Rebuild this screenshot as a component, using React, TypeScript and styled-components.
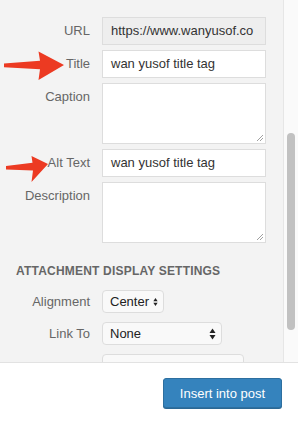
import React from "react";
import styled, { createGlobalStyle } from "styled-components";

const GlobalStyle = createGlobalStyle`
  html, body {
    margin: 0;
    padding: 0;
    background: #ffffff;
  }
  body {
    font-family: "Liberation Sans", Arial, sans-serif;
    font-size: 13px;
    color: #444;
  }
  * {
    box-sizing: border-box;
  }
`;

const Frame = styled.div`
  width: 298px;
  height: 423px;
  display: flex;
  flex-direction: column;
  overflow: hidden;
  position: relative;
`;

const Panel = styled.div`
  height: 362px;
  display: flex;
  flex-direction: row;
  background: #f3f3f3;
  overflow: hidden;
`;

const Content = styled.div`
  flex: 1;
  padding: 17px 0 0 0;
  display: flex;
  flex-direction: column;
`;

const Track = styled.div`
  width: 15px;
  background: #fafafa;
  border-left: 1px solid #e6e6e6;
  padding: 133px 3px 0 3px;
`;

const Thumb = styled.div`
  width: 8px;
  height: 197px;
  border-radius: 4px;
  background: #c1c1c1;
`;

const FieldGrid = styled.div`
  display: grid;
  grid-template-columns: 90px 164px;
  column-gap: 12px;
  row-gap: 5px;
`;

const Label = styled.label`
  text-align: right;
  color: #666;
  font-size: 13px;
  line-height: 16px;
  padding-top: 6px;
`;

const TextInput = styled.div<{ $readonly?: boolean }>`
  height: 28px;
  border: 1px solid #ddd;
  background: ${(p) => (p.$readonly ? "#eeeeee" : "#ffffff")};
  color: #333;
  font-size: 13px;
  line-height: 26px;
  padding: 0 8px;
  white-space: nowrap;
  overflow: hidden;
`;

const TextArea = styled.div`
  height: 61px;
  border: 1px solid #ddd;
  background: #ffffff;
  position: relative;
`;

const Grip = styled.svg`
  position: absolute;
  right: 1px;
  bottom: 1px;
`;

const SectionTitle = styled.h2`
  margin: 21px 0 0 16px;
  font-size: 12px;
  line-height: 14px;
  font-weight: 700;
  color: #666;
  letter-spacing: 0.2px;
  text-transform: uppercase;
`;

const SettingsGrid = styled.div`
  display: grid;
  grid-template-columns: 90px auto;
  column-gap: 12px;
  row-gap: 9px;
  margin-top: 12px;
  justify-items: start;
`;

const SettingLabel = styled.label`
  justify-self: end;
  color: #666;
  font-size: 13px;
  line-height: 23px;
  min-height: 23px;
`;

const Select = styled.div<{ $width: number }>`
  width: ${(p) => p.$width}px;
  height: 23px;
  border: 1px solid #ddd;
  border-radius: 4px;
  background: #f9f9f9;
  color: #222;
  font-size: 13px;
  display: flex;
  align-items: center;
  justify-content: space-between;
  gap: 4px;
  padding: 0 5px 0 7px;
  white-space: nowrap;
`;

const Footer = styled.div`
  flex: 1;
  background: #ffffff;
  border-top: 1px solid #e2e2e2;
  display: flex;
  justify-content: flex-end;
  align-items: flex-start;
  padding: 15px 16px 0 0;
`;

const PrimaryButton = styled.button`
  width: 119px;
  height: 30px;
  border: 1px solid #2d6f9f;
  border-radius: 3px;
  background: #3583bd;
  box-shadow: 0 1px 0 #2a6895;
  color: #ffffff;
  font-family: "Liberation Sans", Arial, sans-serif;
  font-size: 13px;
  padding: 0;
  cursor: pointer;
`;

const ArrowLayer = styled.svg`
  position: absolute;
  left: 0;
  top: 0;
  pointer-events: none;
`;

const SelectArrows = () => (
  <svg width="7" height="12" viewBox="0 0 7 12">
    <path d="M3.5 0.5 L6.5 5 L0.5 5 Z" fill="#222" />
    <path d="M3.5 11.5 L6.5 7 L0.5 7 Z" fill="#222" />
  </svg>
);

const ResizeGrip = () => (
  <Grip width="8" height="8" viewBox="0 0 8 8">
    <path d="M7 1 L1 7 M7 4 L4 7" stroke="#888" strokeWidth="0.8" />
  </Grip>
);

export default function App() {
  return (
    <>
      <GlobalStyle />
      <Frame>
        <Panel>
          <Content>
            <FieldGrid>
              <Label>URL</Label>
              <TextInput $readonly>https://www.wanyusof.co</TextInput>
              <Label>Title</Label>
              <TextInput>wan yusof title tag</TextInput>
              <Label>Caption</Label>
              <TextArea>
                <ResizeGrip />
              </TextArea>
              <Label>Alt Text</Label>
              <TextInput>wan yusof title tag</TextInput>
              <Label>Description</Label>
              <TextArea>
                <ResizeGrip />
              </TextArea>
            </FieldGrid>
            <SectionTitle>Attachment Display Settings</SectionTitle>
            <SettingsGrid>
              <SettingLabel>Alignment</SettingLabel>
              <Select $width={62}>
                Center
                <SelectArrows />
              </Select>
              <SettingLabel>Link To</SettingLabel>
              <Select $width={120}>
                None
                <SelectArrows />
              </Select>
              <SettingLabel />
              <Select $width={142} />
            </SettingsGrid>
          </Content>
          <Track>
            <Thumb />
          </Track>
        </Panel>
        <Footer>
          <PrimaryButton>Insert into post</PrimaryButton>
        </Footer>
        <ArrowLayer width="298" height="362" viewBox="0 0 298 362">
          <path
            d="M4 63.6 L40 60.8 L38.5 51.5 L64 65 L38.5 80 L40 69.2 L4 67.2 Z"
            fill="#ec3a22"
          />
          <path
            d="M6 166 L32.5 162.8 L31.5 156 L48 164 L31.5 182 L33 170.5 L6 169.4 Z"
            fill="#ec3a22"
          />
        </ArrowLayer>
      </Frame>
    </>
  );
}
